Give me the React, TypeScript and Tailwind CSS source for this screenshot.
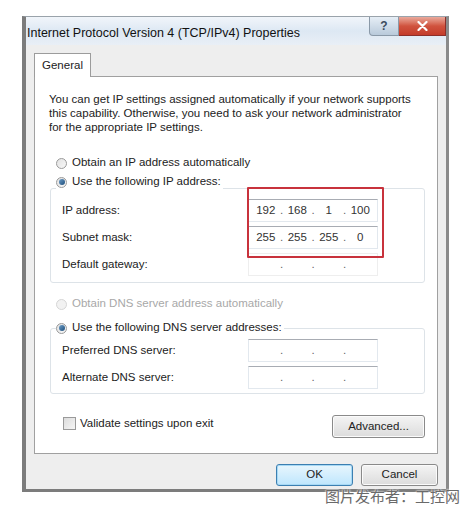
import React from "react";

// Windows 7 style "IPv4 Properties" dialog

const font = { fontFamily: '"Liberation Sans", Arial, sans-serif' };

type RadioProps = { checked?: boolean; disabled?: boolean };

const Radio: React.FC<RadioProps> = ({ checked, disabled }) => (
    <span
        className={`flex h-[11px] w-[11px] shrink-0 items-center justify-center rounded-full border ${
            disabled ? "border-[#d6d6d6] bg-[#f2f2f2]" : "border-[#9a9a9a] bg-gradient-to-br from-[#e2e2e2] to-[#f8f8f8]"
        }`}
    >
        {checked && <span className="h-[6px] w-[6px] rounded-full bg-gradient-to-br from-[#6d9ec8] to-[#1f4f7c]" />}
    </span>
);

type IpFieldProps = { octets?: string[]; faint?: boolean };

const IpField: React.FC<IpFieldProps> = ({ octets = ["", "", "", ""], faint }) => (
    <div
        className={`flex h-[23px] w-[130px] items-center bg-white px-[4px] text-[11.5px] text-[#333] ${
            faint ? "border border-[#eeeeee]" : "border border-[#e2e8ee] border-t-[#a8acb3]"
        }`}
    >
        {octets.map((o, i) => (
            <React.Fragment key={i}>
                <span className="w-[26px] text-center">{o}</span>
                {i < 3 && <span className="w-[6px] text-center text-[#666]">.</span>}
            </React.Fragment>
        ))}
    </div>
);

type RowProps = { label: string; children: React.ReactNode };

const FieldRow: React.FC<RowProps> = ({ label, children }) => (
    <div className="flex h-[23px] items-center justify-between pl-[11px] pr-[46px]">
        <span className="text-[11.5px] text-[#222]">{label}</span>
        {children}
    </div>
);

type ButtonProps = { label: string; width: string; primary?: boolean };

const WinButton: React.FC<ButtonProps> = ({ label, width, primary }) => (
    <div
        className={`flex h-[22px] items-center justify-center rounded-[3px] border text-[11.5px] text-[#222] ${width} ${
            primary
                ? "border-[#3c7fb1] bg-gradient-to-b from-[#e8f6fd] to-[#bee6fd] shadow-[inset_0_0_0_1px_#a7d9f5]"
                : "border-[#8a8a8a] bg-gradient-to-b from-[#f4f4f4] to-[#dcdcdc] shadow-[inset_0_0_0_1px_#fbfbfb]"
        }`}
    >
        {label}
    </div>
);

export default function App() {
    return (
        <div className="relative h-[507px] w-[466px] bg-white pl-[22px] pt-[16px]" style={font}>
            {/* window */}
            <div className="flex h-[476px] w-[427px] flex-col border border-[#9aa3ab] border-b-[3px] border-l-[4px] border-r-[3px] border-b-[#7c7c7c] border-l-[#7c7c7c] border-r-[#8a8a8a] bg-[#eeeeee]">
                {/* title bar */}
                <div className="flex h-[28px] items-start bg-gradient-to-b from-[#f1f5fa] via-[#dde8f3] to-[#e9eff6]">
                    <span className="mt-[7px] pl-[1px] text-[12.5px] text-[#111]">Internet Protocol Version 4 (TCP/IPv4) Properties</span>
                    <div className="ml-auto flex">
                        <div className="flex h-[19px] w-[30px] items-center justify-center rounded-bl-[4px] border border-t-0 border-[#8a99a8] bg-gradient-to-b from-[#e6eef6] to-[#b9cadb] text-[12px] font-bold text-[#3b4b5e]">
                            ?
                        </div>
                        <div className="flex h-[19px] w-[47px] items-center justify-center border border-t-0 border-l-0 border-[#8c2f2a] bg-gradient-to-b from-[#e9a99c] via-[#d0533e] to-[#c43b2a]">
                            <svg width="11" height="10" viewBox="0 0 11 10">
                                <path d="M1.5 1 L9.5 9 M9.5 1 L1.5 9" stroke="#fff" strokeWidth="2.2" strokeLinecap="round" />
                            </svg>
                        </div>
                    </div>
                </div>

                {/* body */}
                <div className="flex flex-1 flex-col px-[8px] pt-[8px]">
                    {/* tab */}
                    <div className="relative z-10 -mb-px flex h-[24px] w-[57px] items-center justify-center border border-b-0 border-[#9c9c9c] bg-white text-[11.5px] text-[#222]">
                        General
                    </div>

                    {/* tab panel */}
                    <div className="relative flex h-[378px] w-[404px] flex-col border border-[#a0a0a0] bg-white">
                        <p className="ml-[14px] mt-[15px] text-[11.5px] leading-[14px] text-[#222]">
                            You can get IP settings assigned automatically if your network supports
                            <br />
                            this capability. Otherwise, you need to ask your network administrator
                            <br />
                            for the appropriate IP settings.
                        </p>

                        <div className="ml-[21px] mt-[22px] flex h-[14px] items-center gap-[5px] text-[11.5px] text-[#222]">
                            <Radio />
                            <span>Obtain an IP address automatically</span>
                        </div>
                        <div className="relative z-10 ml-[21px] mt-[5px] flex h-[14px] w-fit items-center gap-[5px] bg-white pr-[2px] text-[11.5px] text-[#222]">
                            <Radio checked />
                            <span>Use the following IP address:</span>
                        </div>

                        {/* IP group box */}
                        <div className="ml-[15px] mt-[-1px] flex h-[95px] w-[375px] flex-col gap-[4px] rounded-[3px] border border-[#dde3e8] pt-[10px]">
                            <FieldRow label="IP address:">
                                <IpField octets={["192", "168", "1", "100"]} />
                            </FieldRow>
                            <FieldRow label="Subnet mask:">
                                <IpField octets={["255", "255", "255", "0"]} />
                            </FieldRow>
                            <FieldRow label="Default gateway:">
                                <IpField faint />
                            </FieldRow>
                        </div>

                        <div className="ml-[21px] mt-[14px] flex h-[14px] items-center gap-[5px] text-[11.5px] text-[#a8a8a8]">
                            <Radio disabled />
                            <span>Obtain DNS server address automatically</span>
                        </div>
                        <div className="relative z-10 ml-[21px] mt-[10px] flex h-[14px] w-fit items-center gap-[5px] bg-white pr-[2px] text-[11.5px] text-[#222]">
                            <Radio checked />
                            <span>Use the following DNS server addresses:</span>
                        </div>

                        {/* DNS group box */}
                        <div className="ml-[15px] mt-[-7px] flex h-[66px] w-[375px] flex-col gap-[4px] rounded-[3px] border border-[#dde3e8] pt-[10px]">
                            <FieldRow label="Preferred DNS server:">
                                <IpField />
                            </FieldRow>
                            <FieldRow label="Alternate DNS server:">
                                <IpField />
                            </FieldRow>
                        </div>

                        <div className="mt-[21px] flex items-start justify-between pl-[28px] pr-[12px]">
                            <div className="flex items-center gap-[4px] text-[11.5px] text-[#222]">
                                <span className="h-[13px] w-[13px] border border-[#9a9a9a] bg-gradient-to-br from-[#dcdcdc] to-[#f6f6f6]" />
                                <span>Validate settings upon exit</span>
                            </div>
                            <WinButton label="Advanced..." width="w-[93px] h-[23px]" />
                        </div>

                        {/* highlight around the static address fields */}
                        <div className="absolute left-[212px] top-[110px] h-[71px] w-[137px] rounded-[1px] border-2 border-[#c8323c]" />
                    </div>

                    {/* dialog buttons */}
                    <div className="mt-[10px] flex justify-end gap-[8px] pr-[0px]">
                        <WinButton label="OK" width="w-[77px]" primary />
                        <WinButton label="Cancel" width="w-[77px]" />
                    </div>
                </div>
            </div>

            {/* watermark */}
            <div
                className="absolute left-[325px] top-[486px] text-[15px] leading-[19px] text-[#6a6a6a]"
                style={{ fontFamily: '"Noto Sans CJK SC", sans-serif', textShadow: "0 0 2px #fff, 0 0 2px #fff" }}
            >
                图片发布者：工控网
            </div>
        </div>
    );
}
